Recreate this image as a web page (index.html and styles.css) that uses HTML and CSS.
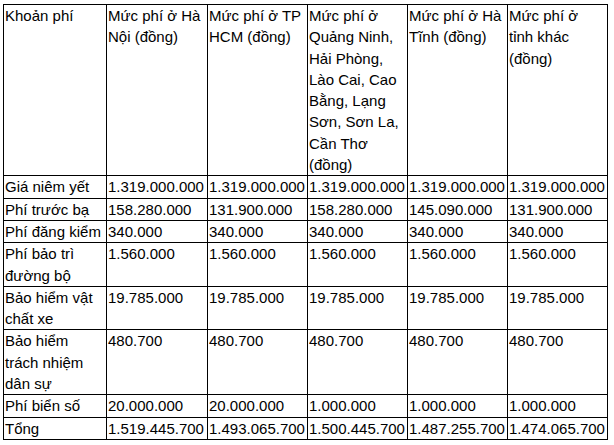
FILE: index.html
```html
<!DOCTYPE html>
<html lang="vi">
<head>
<meta charset="utf-8">
<link rel="stylesheet" href="styles.css">
</head>
<body>
<table class="fees">
  <colgroup>
    <col class="c1"><col class="c2"><col class="c3"><col class="c4"><col class="c5"><col class="c6">
  </colgroup>
  <tr>
    <td>Khoản phí</td>
    <td>Mức phí ở Hà Nội (đồng)</td>
    <td>Mức phí ở TP HCM (đồng)</td>
    <td>Mức phí ở Quảng Ninh, Hải Phòng, Lào Cai, Cao Bằng, Lạng Sơn, Sơn La, Cần Thơ (đồng)</td>
    <td>Mức phí ở Hà Tĩnh (đồng)</td>
    <td>Mức phí ở tỉnh khác (đồng)</td>
  </tr>
  <tr>
    <td>Giá niêm yết</td>
    <td>1.319.000.000</td><td>1.319.000.000</td><td>1.319.000.000</td><td>1.319.000.000</td><td>1.319.000.000</td>
  </tr>
  <tr>
    <td>Phí trước bạ</td>
    <td>158.280.000</td><td>131.900.000</td><td>158.280.000</td><td>145.090.000</td><td>131.900.000</td>
  </tr>
  <tr>
    <td>Phí đăng kiểm</td>
    <td>340.000</td><td>340.000</td><td>340.000</td><td>340.000</td><td>340.000</td>
  </tr>
  <tr>
    <td>Phí bảo trì đường bộ</td>
    <td>1.560.000</td><td>1.560.000</td><td>1.560.000</td><td>1.560.000</td><td>1.560.000</td>
  </tr>
  <tr>
    <td>Bảo hiểm vật chất xe</td>
    <td>19.785.000</td><td>19.785.000</td><td>19.785.000</td><td>19.785.000</td><td>19.785.000</td>
  </tr>
  <tr>
    <td>Bảo hiểm trách nhiệm dân sự</td>
    <td>480.700</td><td>480.700</td><td>480.700</td><td>480.700</td><td>480.700</td>
  </tr>
  <tr>
    <td>Phí biển số</td>
    <td>20.000.000</td><td>20.000.000</td><td>1.000.000</td><td>1.000.000</td><td>1.000.000</td>
  </tr>
  <tr>
    <td>Tổng</td>
    <td>1.519.445.700</td><td>1.493.065.700</td><td>1.500.445.700</td><td>1.487.255.700</td><td>1.474.065.700</td>
  </tr>
</table>
</body>
</html>
```
FILE: styles.css
```css
html, body {
  background: #fff;
}
body {
  margin: 4px 0 0 3px;
  font-family: "Liberation Sans", Arial, sans-serif;
  font-size: 15px;
  color: #000;
}
.fees {
  border-collapse: collapse;
  table-layout: fixed;
  width: 604px;
}
.fees td {
  border: 1px solid #000;
  padding: 0 1px;
  line-height: 21.3px;
  vertical-align: top;
  text-align: left;
}
.c1 { width: 103px; }
.c2 { width: 101px; }
.c3 { width: 100px; }
.c4 { width: 100px; }
.c5 { width: 100px; }
.c6 { width: 100px; }
```
